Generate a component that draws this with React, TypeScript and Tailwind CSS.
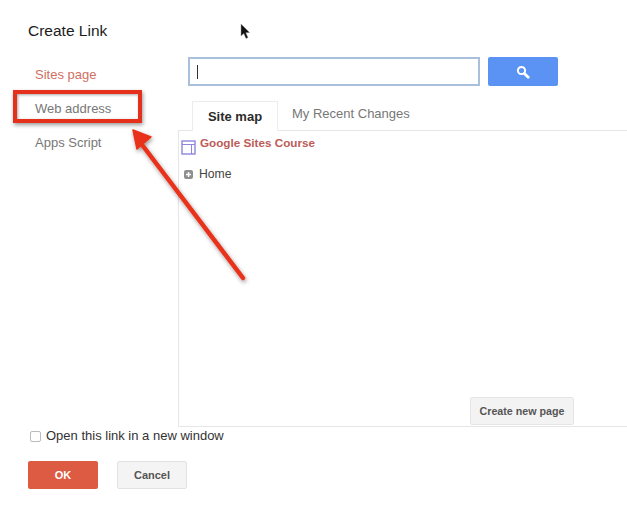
const font = "font-['Liberation_Sans',Arial,sans-serif]";

function SearchIcon() {
  return (
    <svg width="14" height="14" viewBox="0 0 14 14" fill="none">
      <circle cx="5.5" cy="5.5" r="3.6" stroke="white" strokeWidth="2" />
      <path d="M8.4 8.4 L12.2 12.2" stroke="white" strokeWidth="2.8" strokeLinecap="round" />
    </svg>
  );
}

function PageIcon() {
  return (
    <svg width="15" height="15" viewBox="0 0 15 15" fill="none" className="mt-[9px] shrink-0">
      <rect x="1" y="1" width="13" height="13" stroke="#8e86dd" strokeWidth="1.4" />
      <path d="M1 4.5 H14 M10.5 4.5 V14" stroke="#8e86dd" strokeWidth="1" />
    </svg>
  );
}

function PlusIcon() {
  return (
    <svg width="9" height="9" viewBox="0 0 9 9" className="shrink-0">
      <rect width="9" height="9" rx="2" fill="#8f8f8f" />
      <path d="M4.5 2 V7 M2 4.5 H7" stroke="white" strokeWidth="1.4" />
    </svg>
  );
}

function Cursor() {
  return (
    <svg width="12" height="18" viewBox="0 0 12 18" className="absolute left-[240px] top-[23px]">
      <path d="M1 1 V13 L3.8 10.6 L6 15.6 L8 14.6 L5.8 9.8 L9.6 9.6 Z" fill="#111" stroke="#999" strokeWidth="0.5" />
    </svg>
  );
}

function Arrow() {
  return (
    <svg width="140" height="170" viewBox="120 120 140 170" className="absolute left-[120px] top-[120px]">
      <defs>
        <filter id="arrowShadow" x="-20%" y="-20%" width="140%" height="140%">
          <feDropShadow dx="1" dy="2" stdDeviation="2" floodColor="#000" floodOpacity="0.4" />
        </filter>
      </defs>
      <g filter="url(#arrowShadow)">
        <path d="M143 146 L243 278" stroke="#e8321a" strokeWidth="4.5" strokeLinecap="round" />
        <path d="M133 130 L151 137 L137 149 Z" fill="#e8321a" stroke="#e8321a" strokeWidth="1.5" strokeLinejoin="round" />
      </g>
    </svg>
  );
}

export default function App() {
  return (
    <div className={`relative w-[627px] h-[513px] bg-white overflow-hidden ${font}`}>
      <h1 className="pl-[28px] pt-[22px] text-[15.5px] leading-[18px] text-[#1c1c1c]">Create Link</h1>

      <div className="flex mt-[17px]">
        <div className="w-[178px] shrink-0 pl-[35px] pt-[7px] text-[13px]">
          <div className="h-[34px] leading-[22px] text-[#cf6f62]">Sites page</div>
          <div className="h-[34px] leading-[22px] text-[#777]">Web address</div>
          <div className="h-[34px] leading-[22px] text-[#777]">Apps Script</div>
        </div>

        <div className="flex-1">
          <div className="flex pl-[10px] gap-[8px]">
            <div className="w-[292px] h-[29px] border-2 border-[#a9c0dc] flex items-center pl-[7px] bg-white">
              <div className="w-px h-[14px] bg-[#333]" />
            </div>
            <div className="w-[70px] h-[29px] rounded-[2px] bg-[#5b93f5] flex items-center justify-center">
              <SearchIcon />
            </div>
          </div>

          <div className="flex pl-[14px] mt-[14px] h-[30px]">
            <div className="w-[86px] border border-b-0 border-[#ececec] bg-white text-center text-[13px] font-bold leading-[30px] text-[#2b2b2b] relative top-px">
              Site map
            </div>
            <div className="pl-[14px] text-[13px] leading-[28px] text-[#777]">My Recent Changes</div>
          </div>

          <div className="h-[297px] border-l border-t border-b border-[#e6e6e6] flex flex-col">
            <div className="flex pl-[2px] gap-[4px]">
              <PageIcon />
              <div className="pt-[5px] text-[11.7px] leading-[14px] font-bold text-[#bb5c58]">Google Sites Course</div>
            </div>
            <div className="flex items-center pl-[5px] gap-[6px] mt-[11px]">
              <PlusIcon />
              <span className="text-[12.2px] leading-[16px] text-[#444]">Home</span>
            </div>
            <div className="mt-auto flex justify-end pr-[53px] pb-px">
              <button className="w-[104px] h-[28px] bg-[#f3f3f3] border border-[#e5e5e5] rounded-[2px] text-[10.7px] font-bold text-[#555]">
                Create new page
              </button>
            </div>
          </div>
        </div>
      </div>

      <label className="flex items-center pl-[30px] h-[18px] gap-[5px]">
        <span className="w-[11px] h-[11px] border border-[#bbb] rounded-[2px] bg-white" />
        <span className="text-[13px] text-[#333]">Open this link in a new window</span>
      </label>

      <div className="flex pl-[28px] gap-[19px] mt-[16px]">
        <button className="w-[70px] h-[28px] rounded-[2px] bg-[#dd5a43] text-[11px] font-bold text-white">OK</button>
        <button className="w-[70px] h-[28px] rounded-[2px] bg-[#f4f4f4] border border-[#e2e2e2] text-[11px] font-bold text-[#555]">Cancel</button>
      </div>

      <Cursor />
      <div className="absolute left-[13px] top-[90px] w-[129px] h-[33px] border-[4px] border-[#e5301c] shadow-[1px_2px_4px_rgba(0,0,0,0.4),inset_1px_1px_3px_rgba(0,0,0,0.35)]" />
      <Arrow />
    </div>
  );
}
